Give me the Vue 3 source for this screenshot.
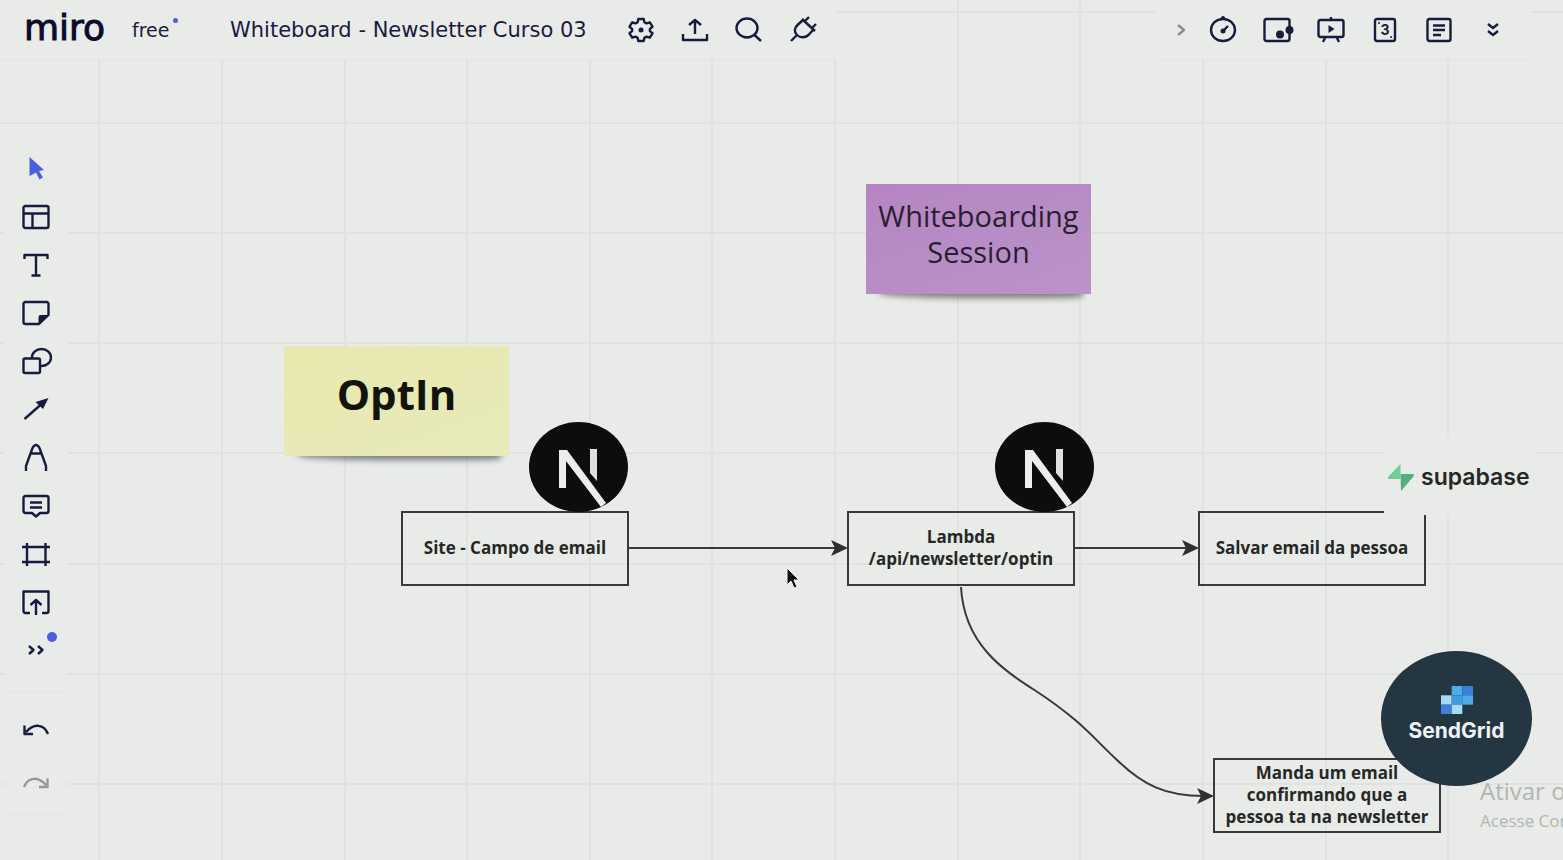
<script setup>
const gridX = [99, 222, 345, 467, 590, 712, 835, 958, 1080, 1203, 1326, 1448]
const gridY = [12, 123, 233, 343, 453, 564, 674, 784]

const point = (radius, degrees) => {
  const angle = (degrees * Math.PI) / 180
  return `${14 + radius * Math.cos(angle)} ${14 + radius * Math.sin(angle) * 0.94}`
}
const gear =
  'M' +
  [30, 90, 150, 210, 270, 330]
    .flatMap((a) => [point(9, a - 22), point(12, a - 13), point(12, a + 13), point(9, a + 22)])
    .join('L') +
  'Z'

const boardActions = [
  { label: 'Settings', line: gear, dots: [[14, 14, 2.5]] },
  { label: 'Export', line: 'M2 18v6h24v-6M14 18V4M8 9l6-5 6 5' },
  { label: 'Search', line: 'M1.500 12a10.500 9.500 0 1 0 21 0a10.500 9.500 0 1 0-21 0M19.500 19l6.500 6' },
  { label: 'Apps', line: 'M13 3l13 12M16 5l4-4M23 12l4-4M14 4L9 8.500C5 12 5 16 8 19s8 3 11.500 0L24 14M8 19l-6 6' },
]

const meetingTools = [
  { label: 'Timer', line: 'M2 14a12 11 0 1 0 24 0a12 11 0 1 0-24 0M14 15l5-5', dots: [[14, 15, 2.5], [14, 2, 2]] },
  { label: 'Attention', line: 'M3.500 3h21q2 0 2 2v18q0 2-2 2h-21q-2 0-2-2V5q0-2 2-2z', dots: [[17, 18.5, 4], [26.5, 14, 4]] },
  { label: 'Present', line: 'M3.500 4h21q2 0 2 2v13q0 2-2 2h-21q-2 0-2-2V6q0-2 2-2zM14 1v3M8 22l-2 4M20 22l2 4', fill: 'M11.500 9v8l6-4z' },
  { label: 'Voting', line: 'M6 3h16q2 0 2 2v18q0 2-2 2H6q-2 0-2-2V5q0-2 2-2z', dots: [[8, 7, 1], [20, 21, 1]], text: '3' },
  { label: 'Notes', line: 'M4.500 3h19q2 0 2 2v18q0 2-2 2h-19q-2 0-2-2V5q0-2 2-2zM8 9.500h12M8 14h12M8 19h8' },
  { label: 'More', line: 'M9 8l5 4 5-4M9 15l5 4 5-4' },
]

const tools = [
  { label: 'Select', fill: 'M7.500 2L22 15l-5 1 4 6.500-3.500 2-3.500-7-6.500 3.500z', active: true },
  { label: 'Templates', line: 'M3.500 3h21q2 0 2 2v18q0 2-2 2h-21q-2 0-2-2V5q0-2 2-2zM1.500 10.500h25M10.500 10.500V25' },
  { label: 'Text', line: 'M2.500 8V4h23v4M14 4v20.500M9.500 24.500h9' },
  { label: 'Sticky note', line: 'M26.500 16V5q0-2-2-2h-21q-2 0-2 2v18q0 2 2 2H17z', fill: 'M16.500 25v-7q0-2 2-2h8z' },
  { label: 'Shapes', line: 'M3 11.500h13.500q1.500 0 1.500 1.500v11.500q0 1.500-1.500 1.500H3q-1.500 0-1.500-1.500V13q0-1.500 1.500-1.500zM10 11A9.500 8.500 0 1 1 18.500 19' },
  { label: 'Connection line', line: 'M2.500 24L19 9.500', fill: 'M26.500 3L21 14 13.500 7z' },
  { label: 'Pen', line: 'M4 28v-5L10.500 5q3.500-6 7 0L24 23v5M9.500 10.500h9' },
  { label: 'Comment', line: 'M3.500 5h21q2 0 2 2v13q0 2-2 2H18l-4 3.500-4-3.500H3.500q-2 0-2-2V7q0-2 2-2zM8 11.500h12M8 16.500h12' },
  { label: 'Frame', line: 'M5 4v23M23.500 4v23M0 8h28M0 23h28' },
  { label: 'Upload', line: 'M8 26H3.500q-2 0-2-2V4.500h25V24q0 2-2 2H20M14 28V13M8.500 18l5.500-5 5.500 5' },
  { label: 'More tools', line: 'M7 11l4.500 4-4.500 4M16 11l4.500 4-4.500 4', badge: true },
]

const history = [
  { label: 'Undo', line: 'M26 18C22 8 12 7 4 16M2.500 9.500V18H11' },
  { label: 'Redo', line: 'M2 17C6 7 16 6 24 15M25.500 8.500V17H17', off: true },
]

const pixels = [
  [10, 0, '#49aee8'], [20, 0, '#3b7fdd'],
  [0, 9, '#a6dcf3'], [10, 9, '#3d9cdb'], [20, 9, '#49aee8'],
  [0, 18, '#3f7fd9'], [10, 18, '#a6dcf3'],
]
</script>

<template>
  <main class="board">
    <div class="canvas">
      <svg class="layer" aria-hidden="true">
        <g class="grid">
          <line v-for="x in gridX" :key="'x' + x" :x1="x" y1="0" :x2="x" y2="100%" />
          <line v-for="y in gridY" :key="'y' + y" x1="0" :y1="y" x2="100%" :y2="y" />
        </g>
        <g class="links">
          <path d="M629 548H838M1075 548H1190M961 587C964 644 1003 670 1036 691C1083 722 1095 740 1117 760C1143 785 1165 796 1204 796" />
        </g>
        <g class="heads">
          <path d="M848 548l-17-8 4 8-4 8z" />
          <path d="M1199 548l-17-8 4 8-4 8z" />
          <path d="M1214 796l-17-8 4 8-4 8z" />
        </g>
      </svg>

      <div class="sticky yellow"><p>OptIn</p></div>
      <div class="sticky purple"><p>Whiteboarding<br />Session</p></div>

      <div class="node site">Site - Campo de email</div>
      <div class="node lambda">Lambda<br />/api/newsletter/optin</div>
      <div class="node save">Salvar email da pessoa</div>
      <div class="node send">Manda um email<br />confirmando que a<br />pessoa ta na newsletter</div>

      <svg v-for="place in ['first', 'second']" :key="place" class="next" :class="place" viewBox="0 0 99 90" role="img" aria-label="Next.js">
        <ellipse cx="49.5" cy="45" rx="49.5" ry="45" fill="#0c0e0c" />
        <path d="M30 28h8L77 81l-5 4L37 39v27h-7z" fill="#eceeec" />
        <path d="M61 27h7v32l-7-8z" fill="#dfe1df" />
      </svg>

      <div class="supabase">
        <svg width="28" height="28" viewBox="0 0 28 28" aria-hidden="true">
          <path d="M13.500 1v15H2q-2-1 0-3z" fill="#6bcf98" />
          <path d="M13.500 11H26q2 1 0 3L14 28z" fill="#52b080" />
        </svg>
        <span>supabase</span>
      </div>

      <div class="sendgrid">
        <svg width="32" height="28" viewBox="0 0 30 27" preserveAspectRatio="none" aria-hidden="true">
          <rect v-for="[x, y, color] in pixels" :key="x + '-' + y" :x="x" :y="y" width="10" height="9" :fill="color" />
        </svg>
        <span>SendGrid</span>
      </div>

      <svg class="pointer" viewBox="0 0 16 24" aria-hidden="true">
        <path d="M2 2v17l4-4 3 7 3-1-3-7h5z" fill="#111" stroke="#f4f5f4" stroke-width="1" />
      </svg>

      <div class="watermark">
        <p class="big">Ativar o</p>
        <p>Acesse Con</p>
      </div>
    </div>

    <header>
      <div class="panel left">
        <a class="brand" href="#">miro</a>
        <span class="plan">free<i></i></span>
        <h1>Whiteboard - Newsletter Curso 03</h1>
        <nav class="icons" aria-label="Board">
          <button v-for="t in boardActions" :key="t.label" type="button" :aria-label="t.label">
            <svg viewBox="0 0 28 28">
              <path class="line" :d="t.line" />
              <circle v-for="(d, i) in t.dots" :key="i" :cx="d[0]" :cy="d[1]" :r="d[2]" />
            </svg>
          </button>
        </nav>
      </div>
      <div class="panel right">
        <button class="expand" type="button" aria-label="Expand">
          <svg viewBox="0 0 28 28"><path class="line" d="M11 9l6 5-6 5" /></svg>
        </button>
        <nav class="icons" aria-label="Meeting tools">
          <button v-for="t in meetingTools" :key="t.label" type="button" :aria-label="t.label">
            <svg viewBox="0 0 28 28">
              <path class="line" :d="t.line" />
              <path v-if="t.fill" :d="t.fill" />
              <circle v-for="(d, i) in t.dots" :key="i" :cx="d[0]" :cy="d[1]" :r="d[2]" />
              <text v-if="t.text" x="14" y="19" text-anchor="middle">{{ t.text }}</text>
            </svg>
          </button>
        </nav>
      </div>
    </header>

    <aside>
      <nav class="tools" aria-label="Tools">
        <button v-for="t in tools" :key="t.label" type="button" :aria-label="t.label" :class="{ active: t.active }">
          <svg viewBox="0 0 28 28">
            <path v-if="t.line" class="line" :d="t.line" />
            <path v-if="t.fill" :d="t.fill" />
          </svg>
          <i v-if="t.badge" class="badge"></i>
        </button>
      </nav>
      <nav class="tools history" aria-label="History">
        <button v-for="t in history" :key="t.label" type="button" :aria-label="t.label" :disabled="t.off">
          <svg viewBox="0 0 28 28"><path class="line" :d="t.line" /></svg>
        </button>
      </nav>
    </aside>
  </main>
</template>

<style>
body {
  margin: 0;
  background: #e8ebe8;
}
</style>

<style scoped>
.board {
  position: relative;
  min-height: 100vh;
  overflow: hidden;
  background: #e8ebe8;
  color: #1b1a3e;
  font-family: "DejaVu Sans", sans-serif;
}
.canvas {
  position: absolute;
  inset: 0;
  overflow: hidden;
  color: #262826;
  font-family: "Open Sans", "Noto Sans", sans-serif;
}
.layer {
  position: absolute;
  inset: 0;
  width: 100%;
  height: 100%;
}
.grid {
  stroke: #dfe2df;
  stroke-width: 2;
}
.links {
  fill: none;
  stroke: #383a38;
  stroke-width: 2;
}
.heads {
  fill: #2e302e;
}
p {
  margin: 0;
}

header {
  position: relative;
  display: flex;
  justify-content: space-between;
}
.panel {
  display: flex;
  align-items: center;
  height: 59px;
  background: #e9ebe9;
  border-bottom: 1px solid #e0e3e0;
}
.left {
  padding: 0 20px 0 24px;
}
.right {
  padding: 0 24px 0 12px;
  margin-right: 32px;
}
.brand {
  width: 108px;
  padding-bottom: 4px;
  color: #0c0b2c;
  font-size: 36px;
  line-height: 40px;
  text-decoration: none;
  -webkit-text-stroke: 1px currentColor;
}
.plan {
  display: flex;
  gap: 4px;
  width: 98px;
  font-size: 19px;
  line-height: 24px;
}
.plan i {
  width: 5px;
  height: 5px;
  border-radius: 50%;
  background: #4a5fe0;
}
h1 {
  width: 371px;
  margin: 0;
  font-size: 21px;
  font-weight: 400;
  line-height: 28px;
  white-space: nowrap;
}
.icons {
  display: flex;
  gap: 26px;
}
.left .icons {
  margin-left: 26px;
}
button {
  position: relative;
  display: block;
  width: 28px;
  height: 28px;
  padding: 0;
  border: 0;
  background: none;
  color: #1b1a3e;
}
button svg {
  display: block;
  width: 28px;
  height: 28px;
  overflow: visible;
  fill: currentColor;
}
.line {
  fill: none;
  stroke: currentColor;
  stroke-width: 2.4;
  stroke-linejoin: round;
}
button text {
  font: 700 14px Inter, sans-serif;
}
.expand {
  margin-right: 14px;
  color: #8b8c96;
}

aside {
  position: relative;
  width: 64px;
  margin: 79px 0 0 4px;
}
.tools {
  display: flex;
  flex-direction: column;
  align-items: center;
  gap: 20px;
  padding: 16px 0 28px;
  background: #e9ebe9;
  border-bottom: 1px solid #e1e4e1;
}
.history {
  gap: 26px;
  padding: 24px 0 16px;
}
.active {
  color: #4a5fe0;
}
button:disabled {
  color: #96979e;
}
.badge {
  position: absolute;
  top: -3px;
  left: 25px;
  width: 10px;
  height: 10px;
  border-radius: 50%;
  background: #4a5fe0;
}

.sticky {
  position: absolute;
  width: 225px;
  height: 110px;
  text-align: center;
}
.sticky::before {
  content: "";
  position: absolute;
  right: 8px;
  bottom: -4px;
  left: 14px;
  height: 10px;
  border-radius: 0 0 20% 50%;
  background: #777977;
  filter: blur(3px);
}
.sticky p {
  position: relative;
  box-sizing: border-box;
  height: 100%;
}
.yellow {
  top: 346px;
  left: 284px;
}
.yellow p {
  padding-top: 24px;
  background: linear-gradient(160deg, #e9e8ae, #e7eab9);
  color: #12130c;
  font-size: 42px;
  font-weight: 700;
  line-height: 48px;
}
.purple {
  top: 184px;
  left: 866px;
}
.purple p {
  padding-top: 14px;
  background: linear-gradient(160deg, #b585c3, #ba93c9);
  color: #2a1f30;
  font-size: 29px;
  line-height: 36px;
}

.node {
  position: absolute;
  display: flex;
  align-items: center;
  justify-content: center;
  box-sizing: border-box;
  width: 228px;
  height: 75px;
  padding-bottom: 2px;
  border: 2px solid #383a38;
  font-size: 17px;
  font-weight: 700;
  line-height: 22px;
  text-align: center;
  white-space: nowrap;
}
.site,
.lambda,
.save {
  top: 511px;
}
.site {
  left: 401px;
}
.lambda {
  left: 847px;
}
.save {
  left: 1198px;
}
.send {
  top: 758px;
  left: 1213px;
}
.next {
  position: absolute;
  top: 422px;
  width: 99px;
  height: 90px;
}
.first {
  left: 529px;
}
.second {
  left: 995px;
}
.supabase {
  position: absolute;
  top: 438px;
  left: 1384px;
  display: flex;
  align-items: center;
  gap: 6px;
  width: 148px;
  height: 77px;
  padding-left: 3px;
  background: #e8ebe8;
  font: 600 23px/28px Inter, sans-serif;
}
.sendgrid {
  position: absolute;
  top: 651px;
  left: 1381px;
  display: flex;
  flex-direction: column;
  align-items: center;
  box-sizing: border-box;
  width: 151px;
  height: 135px;
  padding-top: 35px;
  border-radius: 50%;
  background: #253643;
  color: #eef2f5;
  font: 700 21px/34px Inter, sans-serif;
}
.pointer {
  position: absolute;
  top: 566px;
  left: 785px;
  width: 16px;
  height: 24px;
}
.watermark {
  position: absolute;
  top: 775px;
  left: 1480px;
  color: #b3b5b3;
  font-size: 17px;
  line-height: 28px;
  white-space: nowrap;
}
.watermark .big {
  font-size: 24px;
  line-height: 32px;
}
</style>
